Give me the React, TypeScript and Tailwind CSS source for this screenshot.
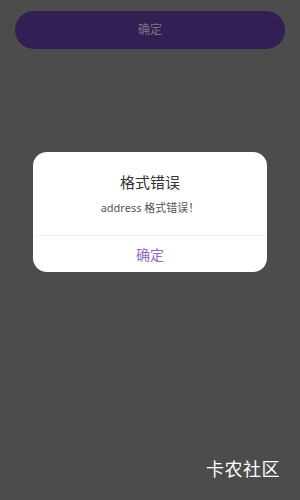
export default function App() {
  return (
    <div
      className="relative h-[500px] w-[300px] overflow-hidden bg-[#4c4c4c]"
      style={{ fontFamily: '"Noto Sans", "Noto Sans CJK SC", sans-serif' }}
    >
      <div className="px-[15px] pt-[11px]">
        <button className="flex h-[38px] w-full items-center justify-center rounded-full bg-[#321f54] text-[12px] text-[#7d7385]">
          确定
        </button>
      </div>

      <div className="absolute inset-0 flex items-start justify-center pt-[152px]">
        <div className="w-[234px] overflow-hidden rounded-[14px] bg-white">
          <div className="flex flex-col items-center px-4 pb-[19px] pt-[19px]">
            <p className="text-[15px] leading-[22px] text-[#333333]">格式错误</p>
            <p className="mt-[7px] text-[11px] leading-[16px] text-[#555555]">
              address 格式错误！
            </p>
          </div>
          <div className="h-px bg-[#f2f2f2]" />
          <div className="flex h-[36px] items-center justify-center text-[14px] text-[#9066c8]">
            确定
          </div>
        </div>
      </div>

      <div className="absolute bottom-[17px] right-[20px] text-[18px] tracking-[0.5px] text-white">
        卡农社区
      </div>
    </div>
  );
}
